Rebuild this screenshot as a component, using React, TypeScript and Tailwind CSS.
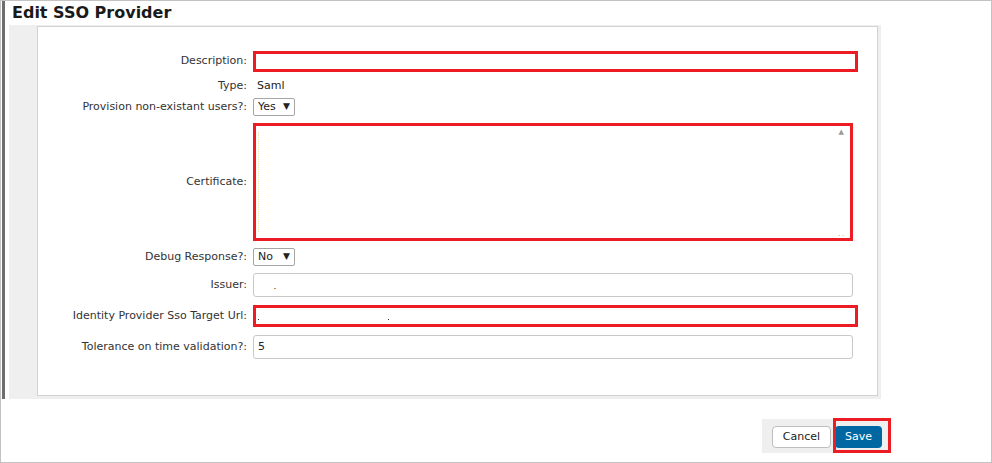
const font = { fontFamily: "'DejaVu Sans', Verdana, sans-serif" };

function Label({ children }: { children: React.ReactNode }) {
  return (
    <div className="w-[215px] shrink-0 pr-[6px] text-right text-[11px] text-[#333]">{children}</div>
  );
}

function Select({ value }: { value: string }) {
  return (
    <div className="flex h-[18px] w-[42px] items-center justify-between rounded-[2px] border border-[#a6a6a6] bg-white pl-[4px] pr-[4px] text-[11px] text-[#222]">
      <span>{value}</span>
      <span className="text-[9px]">▼</span>
    </div>
  );
}

export default function App() {
  return (
    <div className="flex h-[463px] w-[992px] flex-col border border-[#c3c3c3] bg-white" style={font}>
      {/* top section */}
      <div className="h-[398px] border-l-[3px] border-[#6e6e6e] ml-[1px]">
        <h1 className="h-[24px] pl-[7px] pt-[2px] text-[16px] font-bold leading-[20px] text-[#1a1a1a]">
          Edit SSO Provider
        </h1>
        <div className="ml-[4px] h-[374px] w-[872px] bg-[#efefef] pb-[3px] pl-[28px] pr-[3px] pt-[1px]">
          <div className="flex h-[370px] flex-col border border-[#d2d2d2] bg-white">
            <div className="mt-[24px] flex h-[21px] items-center">
              <Label>Description:</Label>
              <div className="h-[21px] w-[605px] border-[3px] border-[#ed1c24] bg-white" />
            </div>
            <div className="mt-[5px] flex h-[18px] items-center">
              <Label>Type:</Label>
              <span className="pl-[4px] text-[11px] text-[#222]">Saml</span>
            </div>
            <div className="mt-[3px] flex h-[18px] items-center">
              <Label>Provision non-existant users?:</Label>
              <Select value="Yes" />
            </div>
            <div className="mt-[7px] flex h-[118px] items-center">
              <Label>Certificate:</Label>
              <div className="relative h-[118px] w-[600px] border-[3px] border-[#ed1c24] bg-white">
                <span className="absolute left-[2px] top-[6px] h-[100px] border-l border-dotted border-[#f3e6a0]" />
                <span className="absolute right-[6px] top-[3px] text-[7px] leading-none text-[#999]">▲</span>
                <span className="absolute bottom-[1px] right-[4px] text-[6px] leading-none tracking-[2px] text-[#555]">..</span>
              </div>
            </div>
            <div className="mt-[7px] flex h-[18px] items-center">
              <Label>Debug Response?:</Label>
              <Select value="No" />
            </div>
            <div className="mt-[7px] flex h-[24px] items-center">
              <Label>Issuer:</Label>
              <div className="relative h-[24px] w-[600px] rounded-[3px] border border-[#c8c8c8] bg-white">
                <span className="absolute left-[20px] top-[14px] h-[1px] w-[2px] bg-[#d08a2a]" />
              </div>
            </div>
            <div className="mt-[8px] flex h-[22px] items-center">
              <Label>Identity Provider Sso Target Url:</Label>
              <div className="relative h-[22px] w-[605px] border-[3px] border-[#ed1c24] bg-white">
                <span className="absolute left-[2px] top-[11px] h-[1px] w-[1px] bg-[#333]" />
                <span className="absolute left-[132px] top-[11px] h-[1px] w-[1px] bg-[#333]" />
              </div>
            </div>
            <div className="mt-[8px] flex h-[24px] items-center">
              <Label>Tolerance on time validation?:</Label>
              <div className="flex h-[24px] w-[600px] items-center rounded-[3px] border border-[#c8c8c8] bg-white pl-[4px] text-[11px] text-[#222]">
                5
              </div>
            </div>
          </div>
        </div>
      </div>

      {/* buttons */}
      <div className="mt-[20px] flex">
        <div className="relative ml-[761px] flex h-[34px] w-[128px] items-start gap-[4px] bg-[#efefef] pl-[10px] pt-[7px]">
          <button className="h-[22px] w-[59px] rounded-[4px] border border-[#bdbdbd] bg-white text-[11px] text-[#222]" style={font}>
            Cancel
          </button>
          <button className="h-[22px] w-[47px] rounded-[4px] bg-[#0067a3] text-[11px] text-white" style={font}>
            Save
          </button>
          <span className="pointer-events-none absolute left-[71px] top-[-1px] h-[35px] w-[58px] border-[3px] border-[#ed1c24]" />
        </div>
      </div>
    </div>
  );
}
